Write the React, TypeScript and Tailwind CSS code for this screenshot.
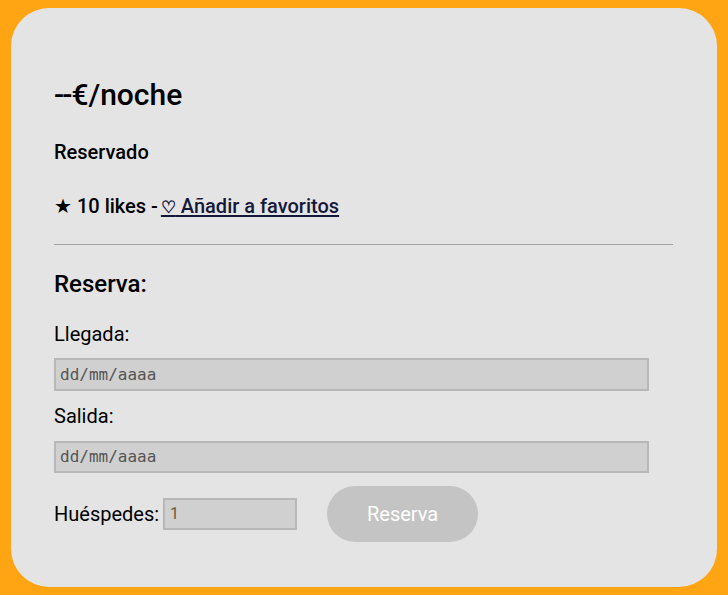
import React from "react";

export default function App() {
  return (
    <div className="w-[728px] h-[595px] bg-[#ffa514] pt-[8px] pl-[11px] pr-[11px] pb-[8px]" style={{ fontFamily: "Roboto, 'Noto Sans', sans-serif" }}>
      <div className="h-full w-full bg-[#e4e4e4] rounded-[38px] pl-[43px] pr-[44px] pt-[70px] text-black">
        <h2 className="text-[30px] leading-[34px] font-medium"><span className="tracking-[-2px]">--</span><span className="ml-[1px]">€/noche</span></h2>
        <p className="mt-[28px] text-[20px] leading-[24px] font-medium">Reservado</p>
        <p className="mt-[30px] text-[20px] leading-[24px] font-medium">
          ★ 10 likes -<a className="ml-[3px] underline text-[#15183a] underline-offset-[2px]" href="#"><span className="text-[17px] leading-[1] font-bold">♡</span> Añadir a favoritos</a>
        </p>
        <hr className="mt-[26px] border-0 border-t border-[#a3a3a3]" />
        <h3 className="mt-[24px] text-[24px] leading-[30px] font-medium">Reserva:</h3>
        <div className="mt-[23px] text-[20px] leading-[24px]">Llegada:</div>
        <div className="mt-[12px] w-[595px] h-[33px] bg-[#d0d0d0] border-2 border-[#b8b8b8] flex items-center pl-[4px] text-[16px] text-[#555]" style={{ fontFamily: "'DejaVu Sans Mono', monospace" }}>
          dd/mm/aaaa
        </div>
        <div className="mt-[13px] text-[20px] leading-[24px]">Salida:</div>
        <div className="mt-[13px] w-[595px] h-[32px] bg-[#d0d0d0] border-2 border-[#b8b8b8] flex items-center pl-[4px] text-[16px] text-[#555]" style={{ fontFamily: "'DejaVu Sans Mono', monospace" }}>
          dd/mm/aaaa
        </div>
        <div className="mt-[13px] flex items-center">
          <span className="text-[20px] leading-[24px]">Huéspedes:</span>
          <div className="ml-[4px] w-[134px] h-[32px] bg-[#d0d0d0] border-2 border-[#b8b8b8] flex items-center pl-[5px] text-[16px] text-[#6b5a3a]">1</div>
          <button className="ml-[30px] w-[151px] h-[56px] rounded-full bg-[#c4c4c4] text-white text-[20px]">Reserva</button>
        </div>
      </div>
    </div>
  );
}
